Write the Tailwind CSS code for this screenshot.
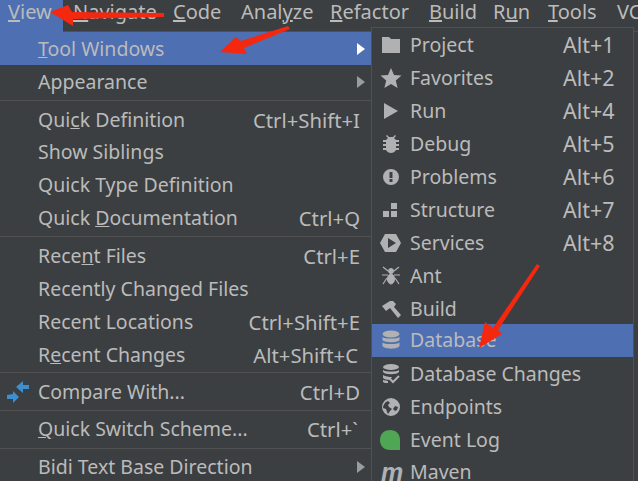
<!DOCTYPE html>
<html lang="en">
<head>
  <meta charset="UTF-8">
  <title>View menu</title>
  <script src="https://cdn.jsdelivr.net/npm/@tailwindcss/browser@4"></script>
</head>
<body class="bg-[#3c3f41] overflow-hidden">
  <div class="relative w-[638px] h-[481px] overflow-hidden bg-[#3c3f41] text-[#bbbbbb] text-[19.5px] leading-[26px] font-['Noto_Sans','Open_Sans',sans-serif]">

    <!-- Menu bar -->
    <div class="flex h-[32px] items-start whitespace-nowrap text-[20px] leading-[24px] border-b border-[#515151]">
      <div class="shrink-0 w-[63px] h-[32px] pl-[8px] bg-[#4f6fb3]"><u>V</u>iew</div>
      <div class="shrink-0 pl-[10px] w-[110px]"><u>N</u>avigate</div>
      <div class="shrink-0 w-[68px]"><u>C</u>ode</div>
      <div class="shrink-0 w-[89px]">Anal<u>y</u>ze</div>
      <div class="shrink-0 w-[99px]"><u>R</u>efactor</div>
      <div class="shrink-0 w-[64px]"><u>B</u>uild</div>
      <div class="shrink-0 w-[55px]">R<u>u</u>n</div>
      <div class="shrink-0 w-[69px]"><u>T</u>ools</div>
      <div class="shrink-0">VCS</div>
    </div>

    <!-- Main menu -->
    <div class="w-[372px] flex flex-col">
      <div class="flex items-center justify-between h-[32.9px] pt-px pl-[38px] pr-[7px] bg-[#4f6fb3]"><span><u>T</u>ool Windows</span><svg class="w-[8px] h-[12px] fill-white" viewBox="0 0 8 12"><path d="M0 0l8 6-8 6z"/></svg></div>
      <div class="flex items-center justify-between h-[32.9px] pt-px pl-[38px] pr-[7px]"><span>Appearance</span><svg class="w-[8px] h-[12px] fill-[#9a9c9e]" viewBox="0 0 8 12"><path d="M0 0l8 6-8 6z"/></svg></div>
      <div class="h-[4.8px] flex items-center"><div class="w-full h-px bg-[#515151]"></div></div>
      <div class="flex items-center justify-between h-[32.9px] pt-px pl-[38px] pr-[12px]"><span>Qui<u>c</u>k Definition</span><span class="text-[20.3px]">Ctrl+Shift+I</span></div>
      <div class="flex items-center h-[32.9px] pt-px pl-[38px]">Show Siblings</div>
      <div class="flex items-center h-[32.9px] pt-px pl-[38px]">Quick Type Definition</div>
      <div class="flex items-center justify-between h-[32.9px] pt-px pl-[38px] pr-[12px]"><span>Quick <u>D</u>ocumentation</span><span class="text-[20.3px]">Ctrl+Q</span></div>
      <div class="h-[4.8px] flex items-center"><div class="w-full h-px bg-[#515151]"></div></div>
      <div class="flex items-center justify-between h-[32.9px] pt-px pl-[38px] pr-[12px]"><span>Rece<u>n</u>t Files</span><span class="text-[20.3px]">Ctrl+E</span></div>
      <div class="flex items-center h-[32.9px] pt-px pl-[38px]">Recently Changed Files</div>
      <div class="flex items-center justify-between h-[32.9px] pt-px pl-[38px] pr-[12px]"><span>Recent Locations</span><span class="text-[20.3px]">Ctrl+Shift+E</span></div>
      <div class="flex items-center justify-between h-[32.9px] pt-px pl-[38px] pr-[14px]"><span>R<u>e</u>cent Changes</span><span class="text-[20.3px]">Alt+Shift+C</span></div>
      <div class="h-[4.8px] flex items-center"><div class="w-full h-px bg-[#515151]"></div></div>
      <div class="flex items-center justify-between h-[32.9px] pl-[6px] pr-[12px]">
        <span class="flex items-center gap-[9px]">
          <svg class="w-[23px] h-[22px] fill-[#3d8fd1]" viewBox="6 380 23 22"><path d="M16 386l7-6v4h6v4h-6v4zM19 396l-6-6v3l-6 1v4h6v4z"/></svg>
          Compare With...</span><span class="text-[20.3px]">Ctrl+D</span></div>
      <div class="h-[4.8px] flex items-center"><div class="w-full h-px bg-[#515151]"></div></div>
      <div class="flex items-center justify-between h-[32.9px] pl-[38px] pr-[14px]"><span><u>Q</u>uick Switch Scheme...</span><span class="text-[20.3px]">Ctrl+`</span></div>
      <div class="h-[4.8px] flex items-center"><div class="w-full h-px bg-[#515151]"></div></div>
      <div class="flex items-center justify-between h-[32.9px] pl-[38px] pr-[7px]"><span>Bidi Text Base Direction</span><svg class="w-[8px] h-[12px] fill-[#9a9c9e]" viewBox="0 0 8 12"><path d="M0 0l8 6-8 6z"/></svg></div>
    </div>

    <!-- Tool Windows submenu -->
    <div class="absolute left-[371px] top-[27px] w-[263px] h-[470px] bg-[#3c3f41] border border-[#515151]">
      <div class="flex items-center h-[32.9px] pt-[2px]">
        <svg class="w-[38px] h-[22px] fill-[#afb1b3]" viewBox="0 0 38 22"><path d="M10 3h7l2 2h9v14H10z"/></svg>
        <span class="w-[153px]">Project</span><span class="text-[21.5px]">Alt+1</span></div>
      <div class="flex items-center h-[32.9px] pt-[2px]">
        <svg class="w-[38px] h-[22px] fill-[#afb1b3]" viewBox="0 0 38 22"><path d="M19 1l3 7 7.500.6-5.700 5 1.800 7.400L19 17l-6.600 4 1.800-7.400-5.700-5L16 8z"/></svg>
        <span class="w-[153px]">Favorites</span><span class="text-[21.5px]">Alt+2</span></div>
      <div class="flex items-center h-[32.9px] pt-[2px]">
        <svg class="w-[38px] h-[22px] fill-[#afb1b3]" viewBox="0 0 38 22"><path d="M12 3l14 8-14 8z"/></svg>
        <span class="w-[153px]">Run</span><span class="text-[21.5px]">Alt+4</span></div>
      <div class="flex items-center h-[32.9px] pt-[2px]">
        <svg class="w-[38px] h-[22px] fill-[#afb1b3]" viewBox="0 0 38 22"><path d="M15 2l2 2h4l2-2 1 1-2 2 2 2h3v2h-3v2h3v2h-3v2h3v2h-3c-1 2-3 3-5 3s-4-1-5-3h-3v-2h3v-2h-3v-2h3V9h-3V7h3l2-2-2-2z"/></svg>
        <span class="w-[153px]">Debug</span><span class="text-[21.5px]">Alt+5</span></div>
      <div class="flex items-center h-[32.9px] pt-[2px]">
        <svg class="w-[38px] h-[22px] fill-[#afb1b3]" viewBox="0 0 38 22"><path fill-rule="evenodd" d="M19 3a8 8 0 1 1 0 16 8 8 0 0 1 0-16zm-1.500 3v6h3V6zm0 7v3h3v-3z"/></svg>
        <span class="w-[153px]">Problems</span><span class="text-[21.5px]">Alt+6</span></div>
      <div class="flex items-center h-[32.9px] pt-[2px]">
        <svg class="w-[38px] h-[22px] fill-[#afb1b3]" viewBox="0 0 38 22"><path d="M19 4h6v6h-6zM11 12h6v6h-6zM19 12h6v6h-6z"/></svg>
        <span class="w-[153px]">Structure</span><span class="text-[21.5px]">Alt+7</span></div>
      <div class="flex items-center h-[32.9px] pt-[2px]">
        <svg class="w-[38px] h-[22px] fill-[#afb1b3]" viewBox="0 0 38 22"><path fill-rule="evenodd" d="M13 2h11l5 9-5 9H13L8 11zm3 4v10l8-5z"/></svg>
        <span class="w-[153px]">Services</span><span class="text-[21.5px]">Alt+8</span></div>
      <div class="flex items-center h-[32.9px] pt-[2px]">
        <svg class="w-[38px] h-[22px] stroke-[#afb1b3] fill-[#afb1b3]" viewBox="0 0 38 22"><ellipse cx="19" cy="6" rx="2.500" ry="2.500"/><ellipse cx="19" cy="14" rx="3.500" ry="5"/><path fill="none" stroke-width="1.200" d="M11 2l5 4M27 2l-5 4M10 10h6M28 10h-6M11 19l4-6M27 19l-4-6"/></svg>
        <span>Ant</span></div>
      <div class="flex items-center h-[32.9px] pt-[2px]">
        <svg class="w-[38px] h-[22px] fill-[#afb1b3]" viewBox="0 0 38 22"><path d="M10 8l8-5h3l3 3-2 3 7 8-3 3-8-10-4 3z"/></svg>
        <span>Build</span></div>
      <div class="flex items-center h-[32.9px] bg-[#4f6fb3]">
        <svg class="w-[38px] h-[22px] fill-[#afb1b3]" viewBox="0 0 38 22"><ellipse cx="19" cy="5" rx="8.500" ry="3.500"/><path d="M10.500 8c2 2 15 2 17 0v3c-2 3-15 3-17 0zM10.500 13.500c2 2 15 2 17 0V17c-2 3.500-15 3.500-17 0z"/></svg>
        <span>Database</span></div>
      <div class="flex items-center h-[32.9px] pt-[2px]">
        <svg class="w-[38px] h-[22px] fill-[#afb1b3]" viewBox="0 0 38 22"><ellipse cx="19" cy="4" rx="8" ry="3"/><path d="M11 7c2 2 14 2 16 0v2c-2 3-14 3-16 0zM11 12c2 1.500 6 2 9 2l-2 3c-3 0-6-1-7-2zM11 17l5 1v2h-3l-2-1z"/><path fill="none" stroke="#afb1b3" stroke-width="2" d="M18 16l3 3 6-6"/></svg>
        <span>Database Changes</span></div>
      <div class="flex items-center h-[32.9px] pt-[2px]">
        <svg class="w-[38px] h-[22px] fill-[#afb1b3]" viewBox="0 0 38 22"><path fill-rule="evenodd" d="M19 2a9 9 0 1 1 0 18 9 9 0 0 1 0-18zm-3 3c-3 1-5 4-5 7l3 1 1 3 1 2 2-3 2-2-3-2-1-2 2-2zm7 5l-2 3 2 2 2-1 1-3z"/></svg>
        <span>Endpoints</span></div>
      <div class="flex items-center h-[32.9px] pt-[2px]">
        <svg class="w-[38px] h-[24px] fill-[#4fa654]" viewBox="0 0 38 24"><path d="M18 2c6 0 10 4 10 10v10H18C12 22 8 18 8 12S12 2 18 2z"/></svg>
        <span>Event Log</span></div>
      <div class="flex items-center h-[32.9px]">
        <span class="w-[38px] pl-[9px] italic font-bold text-[#afb1b3] text-[25px] font-['Liberation_Sans',sans-serif]">m</span>
        <span>Maven</span></div>
    </div>

    <!-- Annotation arrows -->
    <svg class="absolute inset-0 w-[638px] h-[481px] fill-[#f4270f]" viewBox="0 0 638 481">
      <path d="M50 12L68 5l4 7 92 1v4l-91 2v7z"/>
      <path d="M220 52l16-15 5 4 47-15 2 3-46 19 3 6z"/>
      <path d="M479 348l6-26 8 6 44-64 3 2-42 64 4 4z"/>
    </svg>
  </div>
</body>
</html>
